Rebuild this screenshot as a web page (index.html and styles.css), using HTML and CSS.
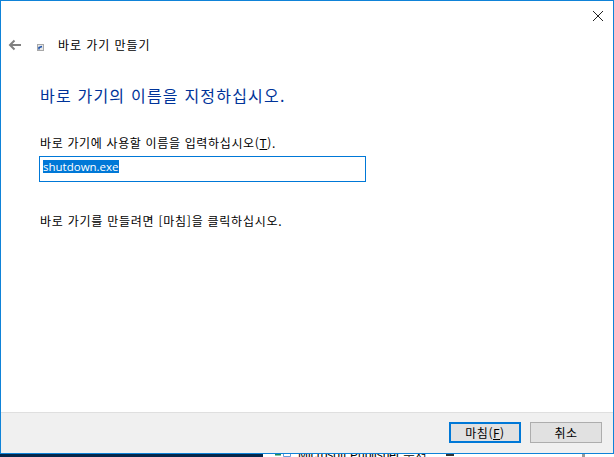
FILE: index.html
```html
<!DOCTYPE html>
<html lang="ko">
<head>
<meta charset="utf-8">
<title>바로 가기 만들기</title>
<link rel="stylesheet" href="styles.css">
</head>
<body>
<div class="dialog">
  <div class="titlebar">
    <svg class="close" width="12" height="12" viewBox="0 0 12 12"><path d="M1 1L11 11M11 1L1 11" stroke="#222" stroke-width="1" fill="none"/></svg>
  </div>
  <div class="nav">
    <svg class="back" width="14" height="12" viewBox="0 0 14 12"><path d="M13 6H2M6.500 1.500L2 6L6.500 10.500" stroke="#808080" stroke-width="2" fill="none"/></svg>
    <svg class="shortcut" width="7" height="7" viewBox="0 0 7 7"><rect x=".5" y=".5" width="6" height="6" fill="#e8e8e8" stroke="#a8a8a8"/><path d="M2 5.500L2 3.500L5 2.500" stroke="#1a4fa8" stroke-width="1.500" fill="none"/></svg>
    <span class="nav-title">바로 가기 만들기</span>
  </div>
  <main class="content">
    <h1 class="heading">바로 가기의 이름을 지정하십시오.</h1>
    <label class="label">바로 가기에 사용할 이름을 입력하십시오(<u>T</u>).</label>
    <div class="input"><span class="selected">shutdown.exe</span></div>
    <p class="hint">바로 가기를 만들려면 [마침]을 클릭하십시오.</p>
  </main>
  <footer class="footer">
    <button class="btn primary">마침(<u>F</u>)</button>
    <button class="btn">취소</button>
  </footer>
</div>
<div class="desktop">
  <div class="desk-left"></div>
  <div class="desk-right">
    <svg class="doc-icon" width="16" height="3" viewBox="0 0 16 3"><path d="M0 0.500H6" stroke="#1f8a5c" stroke-width="2"/><path d="M8.500 0V2.500H15.500V0" stroke="#6a9bd8" fill="none"/></svg>
    <span class="doc">Microsoft Publisher 문서</span>
    <span class="mark"></span>
    <span class="bar"></span>
  </div>
</div>
</body>
</html>
```
FILE: styles.css
```css
* { box-sizing: border-box; }
html, body { margin: 0; padding: 0; }
body {
  width: 614px;
  height: 457px;
  overflow: hidden;
  display: flex;
  flex-direction: column;
  font-family: "Noto Sans CJK KR", "Liberation Sans", sans-serif;
  font-size: 12px;
  color: #000;
  background: #fff;
}
.dialog {
  height: 454px;
  flex: none;
  display: flex;
  flex-direction: column;
  border: 1px solid #0f83d8;
  background: #fff;
}
.titlebar {
  height: 29px;
  flex: none;
  display: flex;
  justify-content: flex-end;
  align-items: flex-start;
  padding: 9px 9px 0 0;
}
.nav {
  height: 30px;
  flex: none;
  display: flex;
  align-items: center;
  padding-left: 7px;
}
.back { flex: none; }
.shortcut { margin: 5px 0 0 15px; flex: none; }
.nav-title { margin-left: 14px; font-size: 12px; line-height: 16px; letter-spacing: .95px; }
.content {
  flex: 1;
  padding: 24px 0 0 38px;
}
.heading {
  margin: 0;
  font-size: 16px;
  font-weight: 400;
  line-height: 22px;
  color: #003399;
  letter-spacing: 1.2px;
  text-indent: 1px;
}
.label {
  display: block;
  margin-top: 29px;
  font-size: 12px;
  line-height: 16px;
  letter-spacing: .65px;
  text-indent: 1px;
}
.input {
  width: 327px;
  height: 26px;
  margin-top: 5px;
  border: 1px solid #0078d7;
  padding: 3px 0 0 3px;
  font-family: "Open Sans", sans-serif;
  font-size: 11.500px;
  line-height: 13px;
}
.selected { display: inline-block; background: #0078d7; color: #fff; vertical-align: top; }
.hint {
  margin: 31px 0 0;
  font-size: 12px;
  line-height: 16px;
  letter-spacing: .75px;
  text-indent: 1px;
}
.footer {
  height: 41px;
  flex: none;
  display: flex;
  justify-content: flex-end;
  gap: 9px;
  padding: 9px 11px 0 0;
  background: #f0f0f0;
  border-top: 1px solid #dfdfdf;
}
.btn {
  width: 72px;
  height: 21px;
  padding: 0;
  border: 1px solid #adadad;
  background: #e1e1e1;
  font-family: inherit;
  font-size: 12px;
  letter-spacing: .5px;
  color: #000;
}
.primary { border: 2px solid #0078d7; }
.desktop { flex: 1; display: flex; overflow: hidden; }
.desk-left { width: 263px; background: #04264a; }
.desk-right {
  flex: 1;
  display: flex;
  align-items: flex-start;
  background: #fff;
  padding-left: 12px;
  font-family: "Liberation Sans", sans-serif;
  font-size: 12px;
  line-height: 15px;
}
.doc-icon { flex: none; }
.doc { margin: -6px 0 0 7px; white-space: nowrap; }
.mark { width: 8px; height: 2px; margin-left: 19px; background: #333; flex: none; }
.bar { width: 3px; height: 3px; margin-left: 128px; background: #9a9a9a; flex: none; }
```
